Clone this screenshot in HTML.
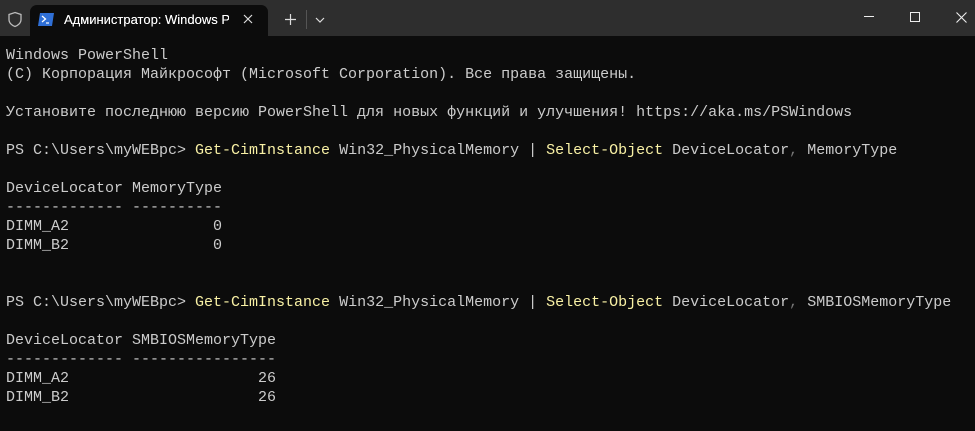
<!DOCTYPE html>
<html><head><meta charset="utf-8"><style>
*{margin:0;padding:0;box-sizing:border-box}
body{width:975px;height:431px;background:#0c0c0c;overflow:hidden;position:relative;font-family:"Liberation Sans",sans-serif}
.bar{position:absolute;left:0;top:0;width:975px;height:36px;background:#2e2e2e}
.tab{position:absolute;left:30px;top:5px;width:238px;height:31px;background:#0c0c0c;border-radius:7px 7px 0 0}
.tt{position:absolute;left:64px;top:12px;font-size:13px;color:#fff;white-space:nowrap;width:165px;overflow:hidden;font-weight:500;text-shadow:0 0 0.3px #fff}
pre{position:absolute;left:6px;top:46px;font-family:"Liberation Mono",monospace;font-size:15px;line-height:19px;color:#cccccc;letter-spacing:0}
.y{color:#f9f1a5}.g{color:#767676}
</style></head><body>
<div class="bar">
<svg style="position:absolute;left:7px;top:11px" width="16" height="17" viewBox="0 0 16 17"><path d="M8 1.5 L14 3.5 V8.5 C14 12 11 14.5 8 15.5 C5 14.5 2 12 2 8.5 V3.5 Z" fill="none" stroke="#bbb" stroke-width="1.3"/></svg>
<div class="tab"></div>
<svg style="position:absolute;left:38px;top:13px" width="16" height="13" viewBox="0 0 16 13"><path d="M2 0 H16 L14 13 H0 Z" fill="#2f6fd6"/><path d="M4 3 L7.5 6 L4 9" stroke="#fff" stroke-width="1.3" fill="none"/><path d="M8 10 H11" stroke="#fff" stroke-width="1.2"/></svg>
<div class="tt">Администратор: Windows PowerShell</div>
<svg style="position:absolute;left:243px;top:14px" width="10" height="10"><path d="M1 1L9 9M9 1L1 9" stroke="#ddd" stroke-width="1.2"/></svg>
<svg style="position:absolute;left:285px;top:14px" width="11" height="11"><path d="M5.5 0V11M0 5.5H11" stroke="#ddd" stroke-width="1.2"/></svg>
<div style="position:absolute;left:306px;top:10px;width:1px;height:19px;background:#555"></div>
<svg style="position:absolute;left:315px;top:17px" width="10" height="6"><path d="M1 1L5 5L9 1" stroke="#ddd" stroke-width="1.2" fill="none"/></svg>
<div style="position:absolute;left:864px;top:16px;width:10px;height:1px;background:#eee"></div>
<div style="position:absolute;left:910px;top:12px;width:10px;height:10px;border:1px solid #eee"></div>
<svg style="position:absolute;left:956px;top:12px" width="11" height="11"><path d="M0.5 0.5L10.5 10.5M10.5 0.5L0.5 10.5" stroke="#eee" stroke-width="1.1"/></svg>
</div>
<pre>Windows PowerShell
(C) Корпорация Майкрософт (Microsoft Corporation). Все права защищены.

Установите последнюю версию PowerShell для новых функций и улучшения! https://aka.ms/PSWindows

PS C:\Users\myWEBpc&gt; <span class="y">Get-CimInstance</span> Win32_PhysicalMemory | <span class="y">Select-Object</span> DeviceLocator<span class="g">,</span> MemoryType

DeviceLocator MemoryType
------------- ----------
DIMM_A2                0
DIMM_B2                0


PS C:\Users\myWEBpc&gt; <span class="y">Get-CimInstance</span> Win32_PhysicalMemory | <span class="y">Select-Object</span> DeviceLocator<span class="g">,</span> SMBIOSMemoryType

DeviceLocator SMBIOSMemoryType
------------- ----------------
DIMM_A2                     26
DIMM_B2                     26
</pre>
</body></html>
